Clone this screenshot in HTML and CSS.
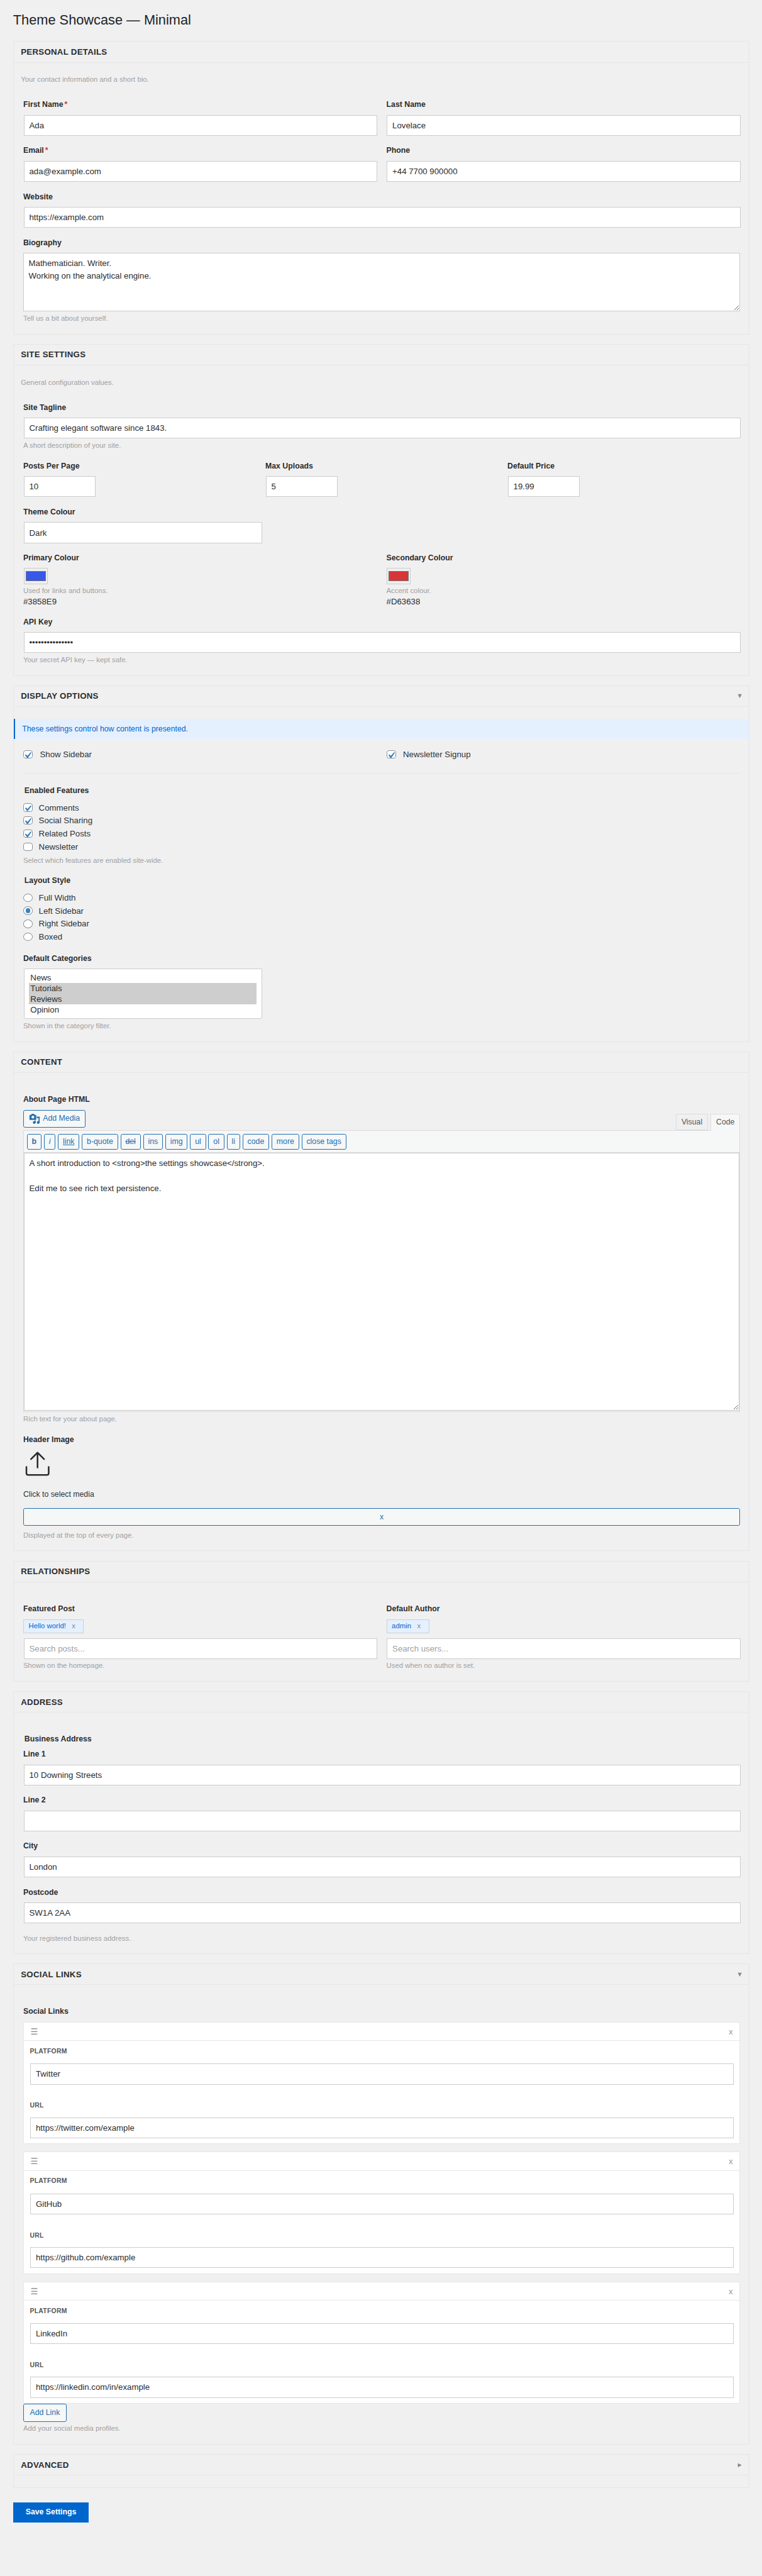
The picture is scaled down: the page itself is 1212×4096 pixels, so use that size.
FILE: index.html
```html
<!DOCTYPE html>
<html lang="en">
<head>
<meta charset="utf-8">
<title>Theme Showcase — Minimal</title>
<link rel="stylesheet" href="styles.css">
</head>
<body>
<div class="wrap">
  <h1 class="page-title">Theme Showcase — Minimal</h1>

  <section class="panel">
    <header class="panel-head"><h2>Personal Details</h2></header>
    <div class="panel-body">
      <p class="desc">Your contact information and a short bio.</p>
      <div class="row-2">
        <div class="field"><label class="lbl">First Name<span class="req">*</span></label><input class="ctl" type="text" value="Ada"></div>
        <div class="field"><label class="lbl">Last Name</label><input class="ctl" type="text" value="Lovelace"></div>
      </div>
      <div class="row-2">
        <div class="field"><label class="lbl">Email<span class="req">*</span></label><input class="ctl" type="text" value="ada@example.com"></div>
        <div class="field"><label class="lbl">Phone</label><input class="ctl" type="text" value="+44 7700 900000"></div>
      </div>
      <div class="field"><label class="lbl">Website</label><input class="ctl" type="text" value="https://example.com"></div>
      <div class="field"><label class="lbl">Biography</label><textarea class="area area-bio">Mathematician. Writer.
Working on the analytical engine.</textarea><p class="hint">Tell us a bit about yourself.</p></div>
    </div>
  </section>

  <section class="panel">
    <header class="panel-head"><h2>Site Settings</h2></header>
    <div class="panel-body">
      <p class="desc">General configuration values.</p>
      <div class="field"><label class="lbl">Site Tagline</label><input class="ctl" type="text" value="Crafting elegant software since 1843."><p class="hint">A short description of your site.</p></div>
      <div class="row-3">
        <div class="field"><label class="lbl">Posts Per Page</label><input class="ctl w-120" type="text" value="10"></div>
        <div class="field"><label class="lbl">Max Uploads</label><input class="ctl w-120" type="text" value="5"></div>
        <div class="field"><label class="lbl">Default Price</label><input class="ctl w-120" type="text" value="19.99"></div>
      </div>
      <div class="field"><label class="lbl">Theme Colour</label><select class="ctl w-400 plain-select"><option>Dark</option></select></div>
      <div class="row-2">
        <div class="field"><label class="lbl lbl-swatch">Primary Colour</label><input class="swatch" type="color" value="#3858e9"><p class="hint hint-swatch">Used for links and buttons.</p><div class="hex">#3858E9</div></div>
        <div class="field"><label class="lbl lbl-swatch">Secondary Colour</label><input class="swatch" type="color" value="#d63638"><p class="hint hint-swatch">Accent colour.</p><div class="hex">#D63638</div></div>
      </div>
      <div class="field"><label class="lbl">API Key</label><input class="ctl" type="password" value="sk_live_example"><p class="hint">Your secret API key — kept safe.</p></div>
    </div>
  </section>

  <section class="panel">
    <header class="panel-head"><h2>Display Options</h2><span class="caret">▾</span></header>
    <div class="panel-body">
      <div class="notice">These settings control how content is presented.</div>
      <div class="row-2 toggles">
        <label class="opt opt-wide"><input class="box" type="checkbox" checked>Show Sidebar</label>
        <label class="opt opt-wide"><input class="box" type="checkbox" checked>Newsletter Signup</label>
      </div>
      <hr class="rule">
      <div class="field">
        <div class="legend legend-opts">Enabled Features</div>
        <label class="opt"><input class="box" type="checkbox" checked>Comments</label>
        <label class="opt"><input class="box" type="checkbox" checked>Social Sharing</label>
        <label class="opt"><input class="box" type="checkbox" checked>Related Posts</label>
        <label class="opt"><input class="box" type="checkbox">Newsletter</label>
        <p class="hint">Select which features are enabled site-wide.</p>
      </div>
      <div class="field">
        <div class="legend legend-opts">Layout Style</div>
        <label class="opt"><input class="dot" type="radio" name="layout">Full Width</label>
        <label class="opt"><input class="dot" type="radio" name="layout" checked>Left Sidebar</label>
        <label class="opt"><input class="dot" type="radio" name="layout">Right Sidebar</label>
        <label class="opt"><input class="dot" type="radio" name="layout">Boxed</label>
      </div>
      <div class="field"><label class="lbl">Default Categories</label>
        <select class="listbox" multiple size="4">
          <option>News</option>
          <option selected>Tutorials</option>
          <option selected>Reviews</option>
          <option>Opinion</option>
        </select>
        <p class="hint">Shown in the category filter.</p>
      </div>
    </div>
  </section>

  <section class="panel">
    <header class="panel-head"><h2>Content</h2></header>
    <div class="panel-body no-desc">
      <div class="field"><label class="lbl">About Page HTML</label>
        <div class="editor-top">
          <button class="btn media-btn" type="button">
            <svg class="media-icon" viewBox="0 0 20 20" aria-hidden="true"><path d="M13 11V4c0-.55-.45-1-1-1h-1.67L9 1H5L3.67 3H2c-.55 0-1 .45-1 1v7c0 .55.45 1 1 1h10c.55 0 1-.45 1-1zM7 4.5c1.38 0 2.5 1.12 2.5 2.5S8.38 9.5 7 9.5 4.5 8.38 4.5 7 5.62 4.5 7 4.5zM14 6h5v10.5c0 1.38-1.12 2.5-2.5 2.5S14 17.88 14 16.5s1.12-2.5 2.5-2.5c.17 0 .34.02.5.05V9h-3V6zm-4 8.05V13h2v3.5c0 1.38-1.12 2.5-2.5 2.5S7 17.88 7 16.5 8.12 14 9.5 14c.17 0 .34.02.5.05z"/></svg>Add Media</button>
          <div class="tabs"><span class="tab">Visual</span><span class="tab tab-on">Code</span></div>
        </div>
        <div class="editor">
          <div class="toolbar">
            <button class="btn qt qt-b" type="button">b</button>
            <button class="btn qt qt-i" type="button">i</button>
            <button class="btn qt qt-link" type="button">link</button>
            <button class="btn qt" type="button">b-quote</button>
            <button class="btn qt qt-del" type="button">del</button>
            <button class="btn qt" type="button">ins</button>
            <button class="btn qt" type="button">img</button>
            <button class="btn qt" type="button">ul</button>
            <button class="btn qt" type="button">ol</button>
            <button class="btn qt" type="button">li</button>
            <button class="btn qt" type="button">code</button>
            <button class="btn qt" type="button">more</button>
            <button class="btn qt" type="button">close tags</button>
          </div>
          <textarea class="area area-editor">A short introduction to &lt;strong&gt;the settings showcase&lt;/strong&gt;.

Edit me to see rich text persistence.</textarea>
        </div>
        <p class="hint">Rich text for your about page.</p>
      </div>
      <div class="field"><label class="lbl">Header Image</label>
        <svg class="upload" viewBox="0 0 48 48" aria-hidden="true"><path d="M24 5V30M13 16 24 5 35 16M5.3 29V39.5a3 3 0 0 0 3 3H39.7a3 3 0 0 0 3-3V29"/></svg>
        <p class="media-note">Click to select media</p>
        <button class="btn wide-btn" type="button">x</button>
        <p class="hint hint-media">Displayed at the top of every page.</p>
      </div>
    </div>
  </section>

  <section class="panel">
    <header class="panel-head"><h2>Relationships</h2></header>
    <div class="panel-body no-desc">
      <div class="row-2">
        <div class="field"><label class="lbl">Featured Post</label>
          <div class="chip"><span class="chip-text">Hello world!</span><span class="chip-x">x</span></div>
          <input class="ctl" type="text" placeholder="Search posts..."><p class="hint">Shown on the homepage.</p></div>
        <div class="field"><label class="lbl">Default Author</label>
          <div class="chip"><span class="chip-text">admin</span><span class="chip-x">x</span></div>
          <input class="ctl" type="text" placeholder="Search users..."><p class="hint">Used when no author is set.</p></div>
      </div>
    </div>
  </section>

  <section class="panel">
    <header class="panel-head"><h2>Address</h2></header>
    <div class="panel-body no-desc">
      <div class="legend legend-addr">Business Address</div>
      <div class="field"><label class="lbl">Line 1</label><input class="ctl" type="text" value="10 Downing Streets"></div>
      <div class="field"><label class="lbl">Line 2</label><input class="ctl" type="text" value=""></div>
      <div class="field"><label class="lbl">City</label><input class="ctl" type="text" value="London"></div>
      <div class="field"><label class="lbl">Postcode</label><input class="ctl" type="text" value="SW1A 2AA"></div>
      <p class="hint hint-last">Your registered business address.</p>
    </div>
  </section>

  <section class="panel">
    <header class="panel-head"><h2>Social Links</h2><span class="caret">▾</span></header>
    <div class="panel-body no-desc">
      <div class="field"><label class="lbl">Social Links</label>
        <div class="card">
          <div class="card-head"><span class="drag">☰</span><span class="card-x">x</span></div>
          <div class="card-body">
            <label class="mini">Platform</label><input class="ctl" type="text" value="Twitter">
            <label class="mini mini-next">URL</label><input class="ctl" type="text" value="https://twitter.com/example">
          </div>
        </div>
        <div class="card">
          <div class="card-head"><span class="drag">☰</span><span class="card-x">x</span></div>
          <div class="card-body">
            <label class="mini">Platform</label><input class="ctl" type="text" value="GitHub">
            <label class="mini mini-next">URL</label><input class="ctl" type="text" value="https://github.com/example">
          </div>
        </div>
        <div class="card">
          <div class="card-head"><span class="drag">☰</span><span class="card-x">x</span></div>
          <div class="card-body">
            <label class="mini">Platform</label><input class="ctl" type="text" value="LinkedIn">
            <label class="mini mini-next">URL</label><input class="ctl" type="text" value="https://linkedin.com/in/example">
          </div>
        </div>
        <button class="btn add-btn" type="button">Add Link</button>
        <p class="hint">Add your social media profiles.</p>
      </div>
    </div>
  </section>

  <section class="panel">
    <header class="panel-head"><h2>Advanced</h2><span class="caret">▸</span></header>
    <div class="panel-body"></div>
  </section>

  <button class="save" type="button">Save Settings</button>
</div>
</body>
</html>
```
FILE: styles.css
```css
/* 1rem = 10 reference pixels, drawn at 0.946875 of the reference's size */
html { font-size: 9.46875px; background: #f0f0f1; }
body {
  margin: 0;
  background: #f0f0f1;
  color: #2c2c2c;
  font-family: "Liberation Sans", Arial, sans-serif;
  font-size: 1.3rem;
  line-height: 1.8rem;
}
.wrap { padding: 0 2.1rem 0 2.2rem; }
.page-title {
  margin: 0;
  padding: 1.9rem 0 2rem;
  font-size: 2.3rem;
  font-weight: 400;
  line-height: 3rem;
  color: #1d2327;
}

/* panels */
.panel { margin-bottom: 1.6rem; border: .1rem solid #e6e6e6; }
.panel-head {
  display: flex;
  align-items: center;
  justify-content: space-between;
  height: 3.4rem;
  padding: 0 1.2rem;
  border-bottom: .1rem solid #e6e6e6;
}
.panel-head h2 {
  margin: 0;
  font-size: 1.4rem;
  font-weight: 700;
  line-height: 1.8rem;
  letter-spacing: .03rem;
  text-transform: uppercase;
  color: #2c2c2c;
}
.caret { font-family: "DejaVu Sans", sans-serif; font-size: 1.3rem; line-height: 1.8rem; color: #888; }
.panel-body { padding: 2rem 1.3rem 0 1.6rem; }
.no-desc { padding-top: 3.6rem; }
.desc { margin: 0 0 2.4rem -.4rem; font-size: 1.2rem; color: #a0a0a0; }

/* fields */
.row-2 { display: grid; grid-template-columns: 59.6rem 59.6rem; column-gap: 1.4rem; }
.row-3 { display: grid; grid-template-columns: repeat(3, 1fr); column-gap: 1.4rem; }
.field { margin-bottom: 1.633rem; }
.lbl { display: block; margin-bottom: .8rem; font-weight: 700; color: #2c2c2c; }
.lbl-swatch { margin-bottom: .7rem; }
.req { margin-left: .2rem; color: #d63638; }
.hint { margin: .3rem 0 0; font-size: 1.2rem; color: #a0a0a0; }
.ctl {
  display: block;
  box-sizing: border-box;
  width: calc(100% - .2rem);
  height: 3.5rem;
  margin: 0 .1rem;
  padding: 0 .8rem;
  border: .1rem solid #ccc;
  border-radius: 0;
  background: #fff;
  color: #2c2c2c;
  font: 1.4rem/1.8rem "Liberation Sans", Arial, sans-serif;
  outline: 0;
}
.ctl::placeholder { color: #a0a0a0; opacity: 1; }
.w-120 { width: 12rem; }
.w-400 { width: 40rem; }
.plain-select { appearance: none; }
.area {
  display: block;
  box-sizing: border-box;
  padding: .6rem .8rem;
  border: .1rem solid #ccc;
  background: #fff;
  color: #2c2c2c;
  font: 1.4rem/2.1rem "Liberation Sans", Arial, sans-serif;
  outline: 0;
}
.area-bio { width: 120.4rem; height: 9.8rem; }
.swatch {
  display: block;
  box-sizing: border-box;
  width: 4rem;
  height: 2.8rem;
  margin: 0 .1rem;
  padding: 0;
  border: .1rem solid #ccc;
  background: transparent;
}
.swatch::-webkit-color-swatch-wrapper { padding: .4rem .2rem; }
.swatch::-webkit-color-swatch { border: .1rem solid #767676; }
.hint-swatch { margin-top: .2rem; }
.hex { font-size: 1.4rem; color: #2c2c2c; }

/* notice and options */
.notice {
  margin: 0 -1.3rem 1.7rem -1.6rem;
  padding: .8rem 1.2rem;
  border-left: .3rem solid #06c;
  background: #e5f0ff;
  color: #06c;
}
.toggles { margin-bottom: 2.2rem; }
.opt { display: flex; align-items: center; height: 2.2rem; font-size: 1.4rem; color: #2c3338; }
.toggles .opt { height: 1.8rem; }
.box, .dot {
  appearance: none;
  flex: none;
  box-sizing: border-box;
  width: 1.6rem;
  height: 1.4rem;
  margin: 0 1rem 0 0;
  border: .1rem solid #8c8f94;
  background: #fff;
}
.opt-wide .box { margin-right: 1.2rem; }
.box { border-radius: .4rem; }
.box:checked::before {
  content: "";
  display: block;
  width: 2.1rem;
  height: 2.1rem;
  margin: -.3rem 0 0 -.4rem;
  background: url("data:image/svg+xml,%3Csvg xmlns='http://www.w3.org/2000/svg' viewBox='0 0 20 20'%3E%3Cpath d='M14.83 4.89l1.34.94-5.81 8.38H9.02L5.78 9.67l1.34-1.25 2.57 2.4z' fill='%233582c4'/%3E%3C/svg%3E") center / 2.1rem no-repeat;
}
.dot { border-radius: 50%; }
.dot:checked::before {
  content: "";
  display: block;
  width: .8rem;
  height: .8rem;
  margin: .2rem 0 0 .3rem;
  border-radius: 50%;
  background: #3582c4;
}
.rule { height: .1rem; margin: 0 0 2rem; border: 0; background: #e6e6e6; }
.legend { margin-left: .2rem; font-weight: 700; color: #2c2c2c; }
.legend-opts { margin-bottom: .8rem; }
.legend-addr { margin-bottom: .7rem; }
.listbox {
  display: block;
  box-sizing: border-box;
  width: 40rem;
  height: 8.45rem;
  margin: .1rem .1rem 0;
  padding: .5rem .8rem;
  border: .1rem solid #ccc;
  background: #fff;
  color: #2c2c2c;
  font: 1.4rem "Liberation Sans", Arial, sans-serif;
  overflow: hidden;
  outline: 0;
}
.listbox option { padding: .1rem .2rem; min-height: 1.6rem; }
.listbox option:checked { background: linear-gradient(#cecece, #cecece); color: #2c2c2c; }

/* buttons */
.btn {
  box-sizing: border-box;
  border: .1rem solid #2271b1;
  border-radius: .3rem;
  background: #f6f7f7;
  color: #2271b1;
  font: 1.3rem/1.8rem "Liberation Sans", Arial, sans-serif;
  cursor: pointer;
}
.editor-top { display: flex; justify-content: space-between; width: 120.4rem; }
.media-btn { display: flex; align-items: center; gap: .5rem; height: 3rem; padding: 0 .8rem; }
.media-icon { width: 1.9rem; height: 1.9rem; fill: #2271b1; }
.tabs { display: flex; align-items: flex-end; gap: .5rem; height: 3.45rem; }
.tab {
  box-sizing: border-box;
  height: 2.8rem;
  padding: .4rem .8rem 0;
  border: .1rem solid #dcdcde;
  color: #50575e;
}
.tab-on { position: relative; z-index: 1; height: 2.9rem; margin-bottom: -.1rem; border-bottom: 0; background: #f6f7f7; }
.editor { box-sizing: border-box; width: 120.4rem; padding-bottom: .1rem; border: .1rem solid #dcdcde; }
.toolbar {
  display: flex;
  gap: .4rem;
  padding: .5rem;
  border-bottom: .1rem solid #dcdcde;
  background: #f6f7f7;
}
.qt { height: 2.6rem; padding: 0 .73rem; }
.qt-b { font-weight: 700; }
.qt-i { font-style: italic; }
.qt-link { text-decoration: underline; }
.qt-del { text-decoration: line-through; }
.area-editor { width: 100%; height: 43.3rem; }
.upload { display: block; width: 4.8rem; height: 4.8rem; fill: none; stroke: #2c2c2c; stroke-width: 2.7; stroke-linecap: round; stroke-linejoin: round; }
.media-note { margin: 1.8rem 0 1.4rem; color: #2c3338; }
.wide-btn { display: block; width: 120.4rem; height: 3rem; padding: 0; }
.hint-media { margin-top: .7rem; }

/* chips */
.chip {
  display: flex;
  align-items: center;
  width: fit-content;
  box-sizing: border-box;
  height: 2.37rem;
  margin-bottom: .8rem;
  padding: 0 1.3rem 0 .8rem;
  border: .1rem solid #ccd0d6;
  background: #e5f0ff;
  font-size: 1.2rem;
}
.chip-text { color: #06c; }
.chip-x { margin-left: 1rem; color: #888; }

/* repeater */
.card { box-sizing: border-box; width: 120.4rem; height: 20.52rem; margin-bottom: 1.28rem; border: .1rem solid #e6e6e6; background: #fff; }
.card:nth-of-type(3) { margin-bottom: 0; }
.card-head {
  display: flex;
  align-items: center;
  justify-content: space-between;
  box-sizing: border-box;
  height: 3.1rem;
  padding: 0 1.1rem;
  border-bottom: .1rem solid #e6e6e6;
}
.drag { font-family: "DejaVu Sans", sans-serif; font-size: 1.4rem; color: #888; }
.card-x { font-size: 1.4rem; color: #999; }
.card-body { padding: .8rem .8rem 0 1rem; }
.mini {
  display: block;
  margin-bottom: 1.2rem;
  font-size: 1.1rem;
  font-weight: 700;
  letter-spacing: .03rem;
  text-transform: uppercase;
  color: #555;
}
.mini-next { margin: 2.6rem 0 1.1rem; }
.add-btn { display: block; height: 3rem; padding: 0 1rem; }

.hint-last { margin: 0; padding-bottom: 1.6rem; }
.save {
  display: block;
  box-sizing: border-box;
  height: 3.4rem;
  margin: 2.4rem 0 0;
  padding: 0 2.1rem;
  border: 0;
  background: #06c;
  color: #fff;
  font: 700 1.3rem/1.8rem "Liberation Sans", Arial, sans-serif;
}
```
